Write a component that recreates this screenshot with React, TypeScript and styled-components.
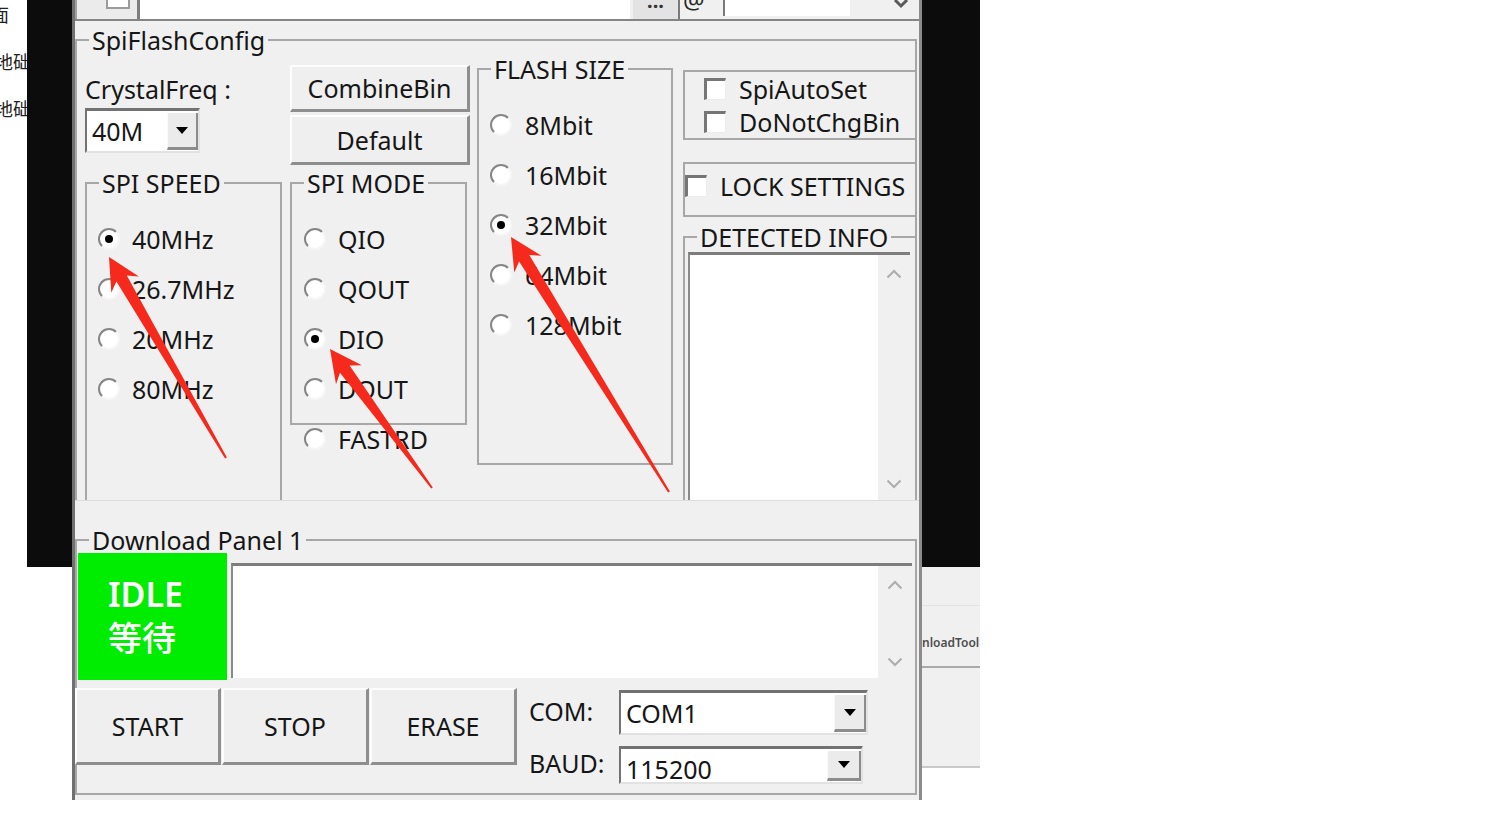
import React from "react";
import styled, { createGlobalStyle } from "styled-components";

const GlobalStyle = createGlobalStyle`
  html, body {
    margin: 0;
    padding: 0;
    background: #fff;
  }
  body {
    font-family: "Noto Sans", "Noto Sans CJK SC", sans-serif;
    color: #161616;
  }
`;

type Pt = [number, number];

// tapered annotation arrow: thin tail, barbed head
const arrowPoints = (tip: Pt, tail: Pt) => {
  const dx = tip[0] - tail[0];
  const dy = tip[1] - tail[1];
  const len = Math.hypot(dx, dy);
  const ux = dx / len;
  const uy = dy / len;
  const nx = -uy;
  const ny = ux;
  const at = (d: number, w: number) =>
    `${(tip[0] - ux * d + nx * w).toFixed(1)},${(tip[1] - uy * d + ny * w).toFixed(1)}`;
  return [at(0, 0), at(32, 16), at(25, 6), at(len, 1), at(len, -1), at(25, -6), at(32, -16)].join(" ");
};

const arrows: [Pt, Pt][] = [
  [[109, 257], [226, 458]],
  [[330, 349], [432, 488]],
  [[511, 237], [669, 492]],
];

const speeds = ["40MHz", "26.7MHz", "20MHz", "80MHz"];
const modes = ["QIO", "QOUT", "DIO", "DOUT"];
const sizes = ["8Mbit", "16Mbit", "32Mbit", "64Mbit", "128Mbit"];

const Chevron = ({ up }: { up?: boolean }) => (
  <svg width="16" height="10" viewBox="0 0 16 10">
    <path d={up ? "M1.5 8.5 L8 2 L14.5 8.5" : "M1.5 1.5 L8 8 L14.5 1.5"} fill="none" stroke="#adadad" strokeWidth="2" />
  </svg>
);

const Radio = ({ label, on, gap }: { label: string; on?: boolean; gap?: number }) => (
  <Option $gap={gap}>
    <RadioDot $on={on} />
    {label}
  </Option>
);

const Check = ({ label }: { label: string }) => (
  <CheckRow>
    <CheckBox />
    {label}
  </CheckRow>
);

const Select = ({ w, h, btn, value, dy }: { w: number; h: number; btn: number; value: string; dy?: number }) => (
  <Combo $w={w} $h={h}>
    <ComboText $dy={dy}>{value}</ComboText>
    <ComboButton $w={btn}>
      <Caret />
    </ComboButton>
  </Combo>
);

export default function App() {
  return (
    <Page>
      <GlobalStyle />
      <EdgeText>
        <ClipLine $shift={-9}>面</ClipLine>
        <ClipLine $shift={-5}>地础</ClipLine>
        <ClipLine $shift={-5}>地础</ClipLine>
      </EdgeText>
      <Backdrop $w={45} />

      <Window>
        <TopStrip>
          <StubButton>
            <StubCheck />
          </StubButton>
          <PathField />
          <DotsButton>...</DotsButton>
          <AtCell>@</AtCell>
          <AddrField />
          <TopTail>
            <svg width="16" height="10" viewBox="0 0 16 10">
              <path d="M2 0 L8 6 L14 0" fill="none" stroke="#5a5a5a" strokeWidth="3" />
            </svg>
          </TopTail>
        </TopStrip>

        <Viewport>
          <Group $mt={4} $mr={2}>
            <Legend>SpiFlashConfig</Legend>
            <ConfigRow>
              <Column $w={197} $ml={8}>
                <FieldLabel $mt={19}>CrystalFreq :</FieldLabel>
                <Spacer $h={4} />
                <Select w={115} h={45} btn={31} value="40M" />
                <Group $mt={15} $w={197} $h={400}>
                  <Legend>SPI SPEED</Legend>
                  <OptionList $pl={11}>
                    {speeds.map((s, i) => (
                      <Radio key={s} label={s} on={i === 0} />
                    ))}
                  </OptionList>
                </Group>
              </Column>

              <Column $w={180} $ml={8}>
                <PushButton $w={180} $h={47} $mt={10}>CombineBin</PushButton>
                <PushButton $w={180} $h={50} $mt={3}>Default</PushButton>
                <Group $mt={3} $w={177} $h={257}>
                  <Legend>SPI MODE</Legend>
                  <OptionList $pl={12}>
                    {modes.map((m, i) => (
                      <Radio key={m} label={m} on={i === 2} />
                    ))}
                  </OptionList>
                </Group>
                <LooseOption>
                  <Radio label="FASTRD" />
                </LooseOption>
              </Column>

              <Column $w={196} $ml={7}>
                <Group $mt={-1} $w={196} $h={411}>
                  <Legend>FLASH SIZE</Legend>
                  <OptionList $pl={11}>
                    {sizes.map((s, i) => (
                      <Radio key={s} label={s} on={i === 2} gap={13} />
                    ))}
                  </OptionList>
                </Group>
              </Column>

              <SideColumn>
                <Frame $mt={15} $h={70} $pl={19} $pt={0}>
                  <Check label="SpiAutoSet" />
                  <Check label="DoNotChgBin" />
                </Frame>
                <Frame $mt={22} $h={55} $pl={0} $pt={5}>
                  <Check label="LOCK SETTINGS" />
                </Frame>
                <Group $mt={5}>
                  <Legend>DETECTED INFO</Legend>
                  <TextBox $h={248} $ml={3} $mr={5}>
                    <WhiteArea />
                    <ScrollTrack>
                      <Chevron up />
                      <Chevron />
                    </ScrollTrack>
                  </TextBox>
                </Group>
              </SideColumn>
            </ConfigRow>
          </Group>
        </Viewport>

        <Group $mt={24} $mr={2} $h={270}>
          <Legend>Download Panel 1</Legend>
          <PanelRow $mt={-2}>
            <StatusTile>
              <span>IDLE</span>
              <StatusCn>等待</StatusCn>
            </StatusTile>
            <TextBox $h={115} $ml={4} $mr={3} $mt={10} $flex>
              <WhiteArea />
              <ScrollTrack $w={34}>
                <Chevron up />
                <Chevron />
              </ScrollTrack>
            </TextBox>
          </PanelRow>
          <PanelRow $mt={8} $ml={-2}>
            <PushButton $w={146} $h={77}>START</PushButton>
            <PushButton $w={147} $h={77} $ml={1}>STOP</PushButton>
            <PushButton $w={147} $h={77} $ml={1}>ERASE</PushButton>
            <PortGrid>
              <PortLabel>COM:</PortLabel>
              <Select w={249} h={45} btn={32} value="COM1" dy={0} />
              <PortLabel>BAUD:</PortLabel>
              <Select w={244} h={38} btn={34} value="115200" dy={6} />
            </PortGrid>
          </PanelRow>
        </Group>
      </Window>

      <RightStrip>
        <Backdrop $w={58} />
        <TaskPanel>
          <TaskTop />
          <TaskLabel>nloadTool</TaskLabel>
        </TaskPanel>
      </RightStrip>

      <ArrowLayer width={1500} height={827} viewBox="0 0 1500 827">
        {arrows.map(([tip, tail], i) => (
          <polygon key={i} points={arrowPoints(tip, tail)} fill="#f5291c" />
        ))}
      </ArrowLayer>
    </Page>
  );
}

const Page = styled.div`
  position: relative;
  width: 1500px;
  height: 827px;
  overflow: hidden;
  display: flex;
  align-items: flex-start;
  background: #fff;
`;

const EdgeText = styled.div`
  width: 27px;
  padding-top: 4px;
  display: flex;
  flex-direction: column;
  gap: 26px;
  overflow: hidden;
  font-family: "Noto Sans CJK SC", sans-serif;
  font-size: 18px;
  line-height: 21px;
  color: #222;
`;

const ClipLine = styled.div<{ $shift: number }>`
  white-space: nowrap;
  margin-left: ${(p) => p.$shift}px;
`;

const Backdrop = styled.div<{ $w: number }>`
  width: ${(p) => p.$w}px;
  height: 567px;
  flex-shrink: 0;
  background: #0c0c0c;
`;

const Window = styled.div`
  width: 850px;
  height: 800px;
  flex-shrink: 0;
  box-sizing: border-box;
  border-left: 3px solid #707070;
  border-right: 3px solid #8b8b8b;
  background: #f0f0f0;
  display: flex;
  flex-direction: column;
  font-size: 25px;
`;

const TopStrip = styled.div`
  height: 19px;
  display: flex;
  align-items: stretch;
  border-bottom: 2px solid #858585;
  overflow: hidden;
`;

const StubButton = styled.div`
  width: 65px;
  box-sizing: border-box;
  border-left: 2px solid #a0a0a0;
  border-right: 3px solid #7c7c7c;
  background: #ebebeb;
  padding-left: 29px;
`;

const StubCheck = styled.div`
  width: 24px;
  height: 9px;
  box-sizing: border-box;
  background: #fff;
  border: 2px solid #9c9c9c;
  border-top: none;
`;

const PathField = styled.div`
  width: 490px;
  background: #fff;
  margin-right: 3px;
`;

const DotsButton = styled.div`
  width: 47px;
  box-sizing: border-box;
  background: #e3e3e3;
  border-right: 2px solid #7a7a7a;
  text-align: center;
  font-weight: 700;
  font-size: 20px;
  line-height: 20px;
  margin-top: -9px;
  height: 28px;
  color: #333;
`;

const AtCell = styled.div`
  width: 40px;
  padding-left: 3px;
  margin-top: -13px;
  height: 32px;
  font-size: 24px;
  line-height: 26px;
  color: #2a2a2a;
`;

const AddrField = styled.div`
  width: 125px;
  height: 16px;
  background: #fff;
  border-left: 2px solid #7a7a7a;
`;

const TopTail = styled.div`
  flex: 1;
  display: flex;
  justify-content: flex-end;
  align-items: flex-start;
  padding-right: 10px;
`;

const Viewport = styled.div`
  height: 479px;
  overflow: hidden;
  border-bottom: 1px solid #dcdcdc;
  display: flex;
  flex-direction: column;
`;

const Group = styled.fieldset<{ $mt?: number; $mr?: number; $w?: number; $h?: number }>`
  margin: ${(p) => p.$mt ?? 0}px ${(p) => p.$mr ?? 0}px 0 0;
  padding: 0;
  min-width: 0;
  box-sizing: border-box;
  border: 2px solid #a7a7a7;
  ${(p) => (p.$w ? `width: ${p.$w}px;` : "")}
  ${(p) => (p.$h ? `height: ${p.$h}px;` : "")}
  flex-shrink: 0;
`;

const Legend = styled.legend`
  margin-left: 12px;
  padding: 0 3px;
  font-size: 25px;
  line-height: 30px;
  color: #161616;
`;

const ConfigRow = styled.div`
  display: flex;
  align-items: flex-start;
`;

const Column = styled.div<{ $w: number; $ml: number }>`
  width: ${(p) => p.$w}px;
  margin-left: ${(p) => p.$ml}px;
  flex-shrink: 0;
  display: flex;
  flex-direction: column;
  align-items: flex-start;
`;

const SideColumn = styled.div`
  flex: 1;
  margin-left: 10px;
  margin-right: -2px;
  display: flex;
  flex-direction: column;
`;

const FieldLabel = styled.div<{ $mt: number }>`
  margin-top: ${(p) => p.$mt}px;
  line-height: 30px;
  white-space: nowrap;
`;

const Spacer = styled.div<{ $h: number }>`
  height: ${(p) => p.$h}px;
`;

const OptionList = styled.div<{ $pl: number }>`
  padding: 16px 0 0 ${(p) => p.$pl}px;
  display: flex;
  flex-direction: column;
`;

const Option = styled.div<{ $gap?: number }>`
  height: 50px;
  display: flex;
  align-items: center;
  gap: ${(p) => p.$gap ?? 12}px;
  white-space: nowrap;
`;

const LooseOption = styled.div`
  margin: -11px 0 0 14px;
`;

const RadioDot = styled.span<{ $on?: boolean }>`
  width: 22px;
  height: 22px;
  flex-shrink: 0;
  box-sizing: border-box;
  border-radius: 50%;
  background: #fff;
  border: 2px solid;
  border-color: #858585 #f6f6f6 #f6f6f6 #858585;
  display: flex;
  align-items: center;
  justify-content: center;

  &::after {
    content: "";
    width: 8px;
    height: 8px;
    border-radius: 50%;
    background: ${(p) => (p.$on ? "#000" : "transparent")};
  }
`;

const Frame = styled.div<{ $mt: number; $h: number; $pl: number; $pt: number }>`
  margin-top: ${(p) => p.$mt}px;
  height: ${(p) => p.$h}px;
  box-sizing: border-box;
  border: 2px solid #a7a7a7;
  padding: ${(p) => p.$pt}px 0 0 ${(p) => p.$pl}px;
  display: flex;
  flex-direction: column;
`;

const CheckRow = styled.div`
  height: 33px;
  display: flex;
  align-items: center;
  gap: 13px;
  white-space: nowrap;
`;

const CheckBox = styled.span`
  width: 22px;
  height: 22px;
  flex-shrink: 0;
  box-sizing: border-box;
  background: #fff;
  border-style: solid;
  border-width: 3px 1px 1px 3px;
  border-color: #767676 #ececec #ececec #767676;
`;

const TextBox = styled.div<{ $h: number; $ml: number; $mr: number; $mt?: number; $flex?: boolean }>`
  height: ${(p) => p.$h}px;
  margin: ${(p) => p.$mt ?? 0}px ${(p) => p.$mr}px 0 ${(p) => p.$ml}px;
  ${(p) => (p.$flex ? "flex: 1;" : "")}
  box-sizing: border-box;
  border-top: 3px solid #7d7d7d;
  border-left: 2px solid #8a8a8a;
  display: flex;
`;

const WhiteArea = styled.div`
  flex: 1;
  background: #fff;
`;

const ScrollTrack = styled.div<{ $w?: number }>`
  width: ${(p) => p.$w ?? 32}px;
  background: #f0f0f0;
  display: flex;
  flex-direction: column;
  align-items: center;
  justify-content: space-between;
  padding: 14px 0 11px;
  box-sizing: border-box;
`;

const Combo = styled.div<{ $w: number; $h: number }>`
  width: ${(p) => p.$w}px;
  height: ${(p) => p.$h}px;
  box-sizing: border-box;
  background: #fff;
  border-style: solid;
  border-width: 3px 2px 2px 2px;
  border-color: #727272 #e2e2e2 #e2e2e2 #727272;
  display: flex;
`;

const ComboText = styled.span<{ $dy?: number }>`
  flex: 1;
  padding: ${(p) => p.$dy ?? 0}px 0 0 5px;
  display: flex;
  align-items: center;
  font-size: 25px;
  white-space: nowrap;
`;

const ComboButton = styled.span<{ $w: number }>`
  width: ${(p) => p.$w}px;
  margin: 2px 0 1px;
  box-sizing: border-box;
  background: #ebebeb;
  border-left: 1px solid #fafafa;
  border-right: 2px solid #8c8c8c;
  border-bottom: 3px solid #8c8c8c;
  display: flex;
  align-items: center;
  justify-content: center;
`;

const Caret = styled.span`
  width: 0;
  height: 0;
  border-left: 6px solid transparent;
  border-right: 6px solid transparent;
  border-top: 7px solid #000;
`;

const PushButton = styled.div<{ $w: number; $h: number; $mt?: number; $ml?: number }>`
  width: ${(p) => p.$w}px;
  height: ${(p) => p.$h}px;
  margin-top: ${(p) => p.$mt ?? 0}px;
  margin-left: ${(p) => p.$ml ?? 0}px;
  flex-shrink: 0;
  box-sizing: border-box;
  background: #efefef;
  border-style: solid;
  border-width: 2px 3px 3px 2px;
  border-color: #fdfdfd #8e8e8e #8e8e8e #fdfdfd;
  display: flex;
  align-items: center;
  justify-content: center;
  font-size: 25px;
  color: #161616;
`;

const PanelRow = styled.div<{ $mt: number; $ml?: number }>`
  margin-top: ${(p) => p.$mt}px;
  margin-left: ${(p) => p.$ml ?? 0}px;
  display: flex;
  align-items: flex-start;
`;

const StatusTile = styled.div`
  width: 149px;
  height: 127px;
  margin-left: 1px;
  flex-shrink: 0;
  box-sizing: border-box;
  background: #00ec00;
  color: #fff;
  padding: 20px 0 0 30px;
  display: flex;
  flex-direction: column;
  font-size: 34px;
  font-weight: 600;
  line-height: 42px;
`;

const StatusCn = styled.span`
  font-family: "Noto Sans CJK SC", sans-serif;
  font-weight: 500;
  font-size: 34px;
  line-height: 44px;
`;

const PortGrid = styled.div`
  margin: 2px 0 0 12px;
  display: grid;
  grid-template-columns: 90px auto;
  grid-template-rows: 45px 38px;
  row-gap: 11px;
  align-items: center;
`;

const PortLabel = styled.span`
  font-size: 25px;
  line-height: 30px;
  margin-top: -4px;
`;

const RightStrip = styled.div`
  width: 58px;
  flex-shrink: 0;
  display: flex;
  flex-direction: column;
`;

const TaskPanel = styled.div`
  height: 201px;
  box-sizing: border-box;
  background: #f0f0f0;
  border-bottom: 2px solid #c9c9c9;
  overflow: hidden;
`;

const TaskTop = styled.div`
  height: 38px;
  border-bottom: 1px solid #e2e2e2;
`;

const TaskLabel = styled.div`
  height: 62px;
  box-sizing: border-box;
  padding-top: 30px;
  border-bottom: 2px solid #a9a9a9;
  font-size: 12px;
  line-height: 14px;
  font-weight: 600;
  color: #4d4d4d;
  white-space: nowrap;
`;

const ArrowLayer = styled.svg`
  position: absolute;
  left: 0;
  top: 0;
  pointer-events: none;
`;
